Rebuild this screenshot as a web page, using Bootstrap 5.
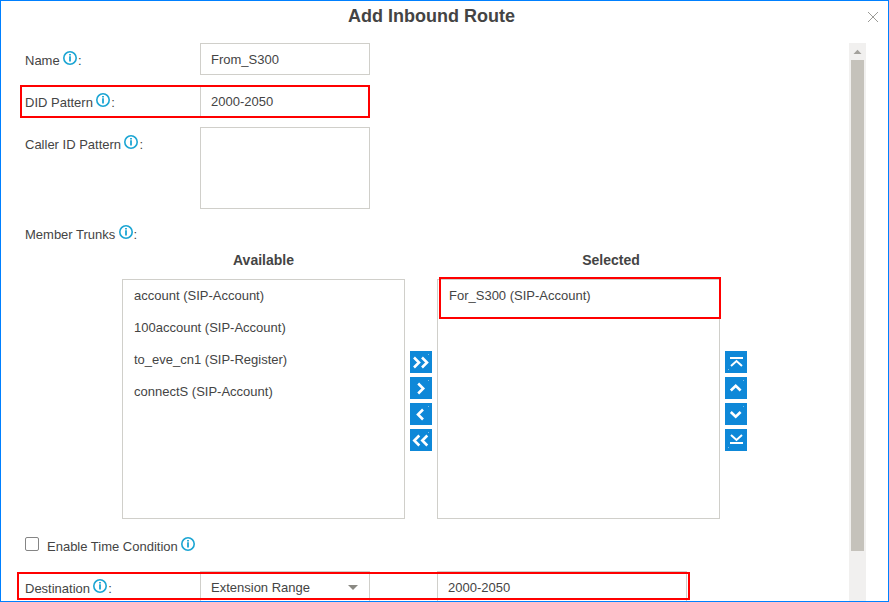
<!DOCTYPE html>
<html lang="en">
<head>
<meta charset="utf-8">
<title>Add Inbound Route</title>
<link href="https://cdn.jsdelivr.net/npm/bootstrap@5.3.0/dist/css/bootstrap.min.css" rel="stylesheet">
<style>
body{font-family:"Liberation Sans",Arial,sans-serif;font-size:13px;line-height:16px;color:#444;background:#fff}
.dialog{width:889px;height:602px;border:1px solid #0080ff}
.dialog-head{height:42px;padding-top:3px}
.dialog-title{font-size:18px;line-height:24px;font-weight:700;color:#444;padding-right:26px}
.close-x{top:10px;right:9px;width:12px;height:12px}
.dialog-body{height:558px}
.form-area{width:848px;padding-left:24px}
.field-row{margin-bottom:10px}
.field-label{width:175px;height:32px;padding-top:4px}
.info{width:14px;height:14px;margin:-6px 1px 0 3.3px}
.box,.form-control.box,.form-select.box{width:170px;height:32px;border:1px solid #d0cfca;border-radius:0;padding:0 10px;font-size:13px;line-height:30px;color:#444;background-color:#fff}
.form-control.box-area{height:82px;resize:none}
.form-select.box{padding-top:1px;background-image:url("data:image/svg+xml,%3Csvg xmlns='http://www.w3.org/2000/svg' width='10' height='5'%3E%3Cpath d='M0 0h10L5 5z' fill='%238a8983'/%3E%3C/svg%3E");background-size:10px 5px;background-position:right 11px top 13px}
.form-control.box-wide{width:250px;margin-left:67px}
.trunks{margin-left:97px;margin-top:-2px}
.pane-head{font-size:14px;line-height:18px;height:32px;font-weight:700}
.pane-head-end{padding-left:65px}
.pane{width:283px}
.pane-list{height:240px;border:1px solid #d0cfca}
.pane-list .list-group-item{border:0;height:32px;padding:0 11px;line-height:32px;color:#444;background:transparent}
.tools{gap:4px;padding-top:104px;margin:0 5px}
.btn.tool{width:22px;height:22px;border:0;border-radius:0;background:#0e88d8;padding:0}
.tool path{fill:none;stroke:#fff;stroke-width:2.6}
.tool .thin{stroke-width:2}
.tool rect{fill:#7fc0ea}
.time-row{height:32px;margin-top:10px;margin-bottom:10px}
.form-check-input.tick{width:14px;height:14px;margin:-2px 8px 0 0;border:1px solid #858585;border-radius:2px}
.bar{width:17px;background:#f1f0ef}
.thumb{width:13px;height:491px;background:#c5c2bb}
.mark-box{border:2px solid #f00;pointer-events:none}
.mark-did{left:20px;top:85px;width:350px;height:33px}
.mark-sel{left:439px;top:277px;width:282px;height:42px}
.mark-dest{left:17px;top:572px;width:673px;height:28px}
</style>
<script src="https://cdn.jsdelivr.net/npm/bootstrap@5.3.0/dist/js/bootstrap.bundle.min.js"></script>
</head>
<body class="overflow-hidden position-relative">
<svg class="d-none">
  <symbol id="i-info" viewBox="0 0 14 14"><circle cx="7" cy="7" r="6.2" fill="none" stroke="#1ba5d3" stroke-width="1.6"/><path d="M7 3v1.6M7 5.2V10.6" stroke="#1ba5d3" stroke-width="1.8"/></symbol>
</svg>
<div class="dialog overflow-hidden">
  <header class="dialog-head position-relative text-center">
    <h1 class="dialog-title m-0">Add Inbound Route</h1>
    <svg class="close-x position-absolute" viewBox="0 0 12 12"><path d="M1 1l10 10M11 1L1 11" stroke="#9b9b97" fill="none"/></svg>
  </header>
  <div class="dialog-body d-flex">
    <form class="form-area flex-shrink-0">
      <div class="field-row d-flex">
        <label class="field-label d-flex align-items-center">Name<svg class="info"><use href="#i-info"/></svg>:</label>
        <input class="form-control box" value="From_S300">
      </div>
      <div class="field-row d-flex">
        <label class="field-label d-flex align-items-center">DID Pattern<svg class="info"><use href="#i-info"/></svg>:</label>
        <input class="form-control box" value="2000-2050">
      </div>
      <div class="d-flex mb-2">
        <label class="field-label d-flex align-items-center">Caller ID Pattern<svg class="info"><use href="#i-info"/></svg>:</label>
        <textarea class="form-control box box-area"></textarea>
      </div>
      <label class="field-label d-flex align-items-center">Member Trunks<svg class="info"><use href="#i-info"/></svg>:</label>
      <div class="trunks d-flex">
        <section class="pane">
          <div class="pane-head text-center pt-1">Available</div>
          <ul class="pane-list list-group rounded-0">
            <li class="list-group-item">account (SIP-Account)</li>
            <li class="list-group-item">100account (SIP-Account)</li>
            <li class="list-group-item">to_eve_cn1 (SIP-Register)</li>
            <li class="list-group-item">connectS (SIP-Account)</li>
          </ul>
        </section>
        <div class="tools d-flex flex-column">
          <button type="button" class="btn tool d-flex"><svg width="22" height="22"><path d="M4 6.500l5 5-5 5M12 6.500l5 5-5 5"/><rect x="18" y="3" width="1" height="1"/></svg></button>
          <button type="button" class="btn tool d-flex"><svg width="22" height="22"><path d="M8.200 6.500l5 5-5 5"/><rect x="18" y="3" width="1" height="1"/></svg></button>
          <button type="button" class="btn tool d-flex"><svg width="22" height="22"><path d="M13 6.500l-5 5 5 5"/><rect x="18" y="3" width="1" height="1"/></svg></button>
          <button type="button" class="btn tool d-flex"><svg width="22" height="22"><path d="M9.300 6.500l-5 5 5 5M17.300 6.500l-5 5 5 5"/><rect x="18" y="3" width="1" height="1"/></svg></button>
        </div>
        <section class="pane">
          <div class="pane-head pane-head-end text-center pt-1">Selected</div>
          <ul class="pane-list list-group rounded-0">
            <li class="list-group-item">For_S300 (SIP-Account)</li>
          </ul>
        </section>
        <div class="tools d-flex flex-column">
          <button type="button" class="btn tool d-flex"><svg width="22" height="22"><path class="thin" d="M5 7h13M6 15l5.500-5L17 15"/><rect x="3" y="18" width="1" height="1"/></svg></button>
          <button type="button" class="btn tool d-flex"><svg width="22" height="22"><path d="M5.800 13.500l4.900-4.800 4.900 4.800"/><rect x="18" y="3" width="1" height="1"/></svg></button>
          <button type="button" class="btn tool d-flex"><svg width="22" height="22"><path d="M5.800 9l4.900 4.800L15.600 9"/><rect x="18" y="3" width="1" height="1"/></svg></button>
          <button type="button" class="btn tool d-flex"><svg width="22" height="22"><path class="thin" d="M5 14h13M6 6l5.500 5L17 6"/><rect x="3" y="18" width="1" height="1"/></svg></button>
        </div>
      </div>
      <div class="time-row d-flex align-items-center">
        <input class="form-check-input tick" type="checkbox" id="time">
        <label class="d-flex align-items-center pt-1" for="time">Enable Time Condition<svg class="info"><use href="#i-info"/></svg></label>
      </div>
      <div class="d-flex">
        <label class="field-label d-flex align-items-center">Destination<svg class="info"><use href="#i-info"/></svg>:</label>
        <select class="form-select box"><option>Extension Range</option></select>
        <input class="form-control box box-wide" value="2000-2050">
      </div>
    </form>
    <div class="bar d-flex flex-column align-items-center">
      <svg width="17" height="17" class="flex-shrink-0"><path d="M4.500 11h8L8.500 6.800z" fill="#a3a19c"/></svg>
      <div class="thumb"></div>
    </div>
  </div>
</div>
<div class="mark-box mark-did position-absolute"></div>
<div class="mark-box mark-sel position-absolute"></div>
<div class="mark-box mark-dest position-absolute"></div>
</body>
</html>
